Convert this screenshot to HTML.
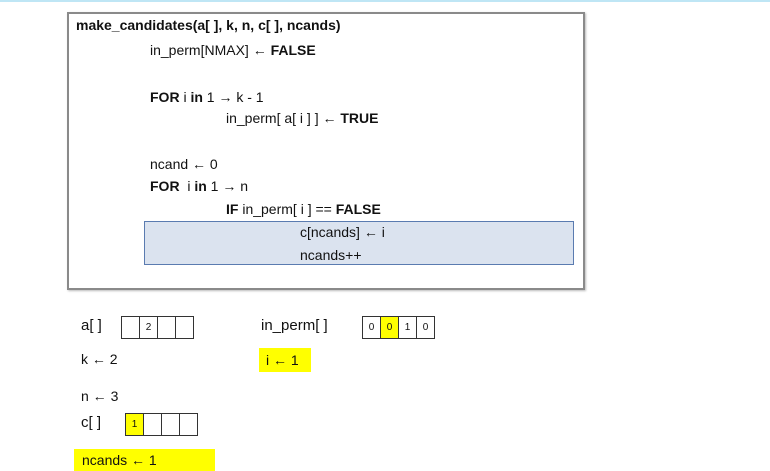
<!DOCTYPE html>
<html><head><meta charset="utf-8"><style>
body{margin:0;width:770px;height:471px;background:#fff;position:relative;overflow:hidden;font-family:"Liberation Sans","Noto Sans CJK KR",sans-serif;color:#111;}
.t{position:absolute;font-size:14px;white-space:nowrap;line-height:16px}
b{font-weight:bold}
.box{position:absolute;left:67px;top:12px;width:518px;height:278px;border:2px solid #8a8a8a;box-sizing:border-box;box-shadow:1px 1px 2px #bbb}
.hl{position:absolute;left:144px;top:221px;width:430px;height:44px;background:#dbe3ef;border:1px solid #5a7bb0;box-sizing:border-box}
.cells{position:absolute;display:flex;border:1px solid #333}
.cells div{width:17px;height:21px;border-left:1px solid #333;font-size:10px;display:flex;align-items:center;justify-content:center}
.cells div:first-child{border-left:none}
.y{background:#ffff00}
</style></head><body>
<div style="position:absolute;left:0;top:0;width:770px;height:2px;background:#bfe6f5"></div>
<div class="box"></div>
<div class="hl"></div>
<div class="t" style="left:76px;top:17px"><b>make_candidates(a[ ], k, n, c[ ], ncands)</b></div>
<div class="t" style="left:150px;top:42px">in_perm[NMAX] ← <b>FALSE</b></div>
<div class="t" style="left:150px;top:89px"><b>FOR</b> i <b>in</b> 1 → k - 1</div>
<div class="t" style="left:226px;top:110px">in_perm[ a[ i ] ] ← <b>TRUE</b></div>
<div class="t" style="left:150px;top:156px">ncand ← 0</div>
<div class="t" style="left:150px;top:178px"><b>FOR</b>&nbsp; i <b>in</b> 1 → n</div>
<div class="t" style="left:226px;top:201px"><b>IF</b> in_perm[ i ] == <b>FALSE</b></div>
<div class="t" style="left:300px;top:224px">c[ncands] ← i</div>
<div class="t" style="left:300px;top:247px">ncands++</div>

<div class="t" style="left:81px;top:318px;font-size:15px">a[ ]</div>
<div class="cells" style="left:121px;top:316px"><div></div><div>2</div><div></div><div></div></div>
<div class="t" style="left:261px;top:318px;font-size:15px">in_perm[ ]</div>
<div class="cells" style="left:362px;top:316px"><div>0</div><div class="y">0</div><div>1</div><div>0</div></div>
<div class="t y" style="left:259px;top:348px;width:52px;height:24px;line-height:24px;padding-left:7px;box-sizing:border-box">i ← 1</div>
<div class="t" style="left:81px;top:351px">k ← 2</div>
<div class="t" style="left:81px;top:388px">n ← 3</div>
<div class="t" style="left:81px;top:415px;font-size:15px">c[ ]</div>
<div class="cells" style="left:125px;top:413px"><div class="y">1</div><div></div><div></div><div></div></div>
<div class="t y" style="left:74px;top:449px;width:141px;height:22px;line-height:22px;padding-left:8px;box-sizing:border-box">ncands ← 1</div>
</body></html>
